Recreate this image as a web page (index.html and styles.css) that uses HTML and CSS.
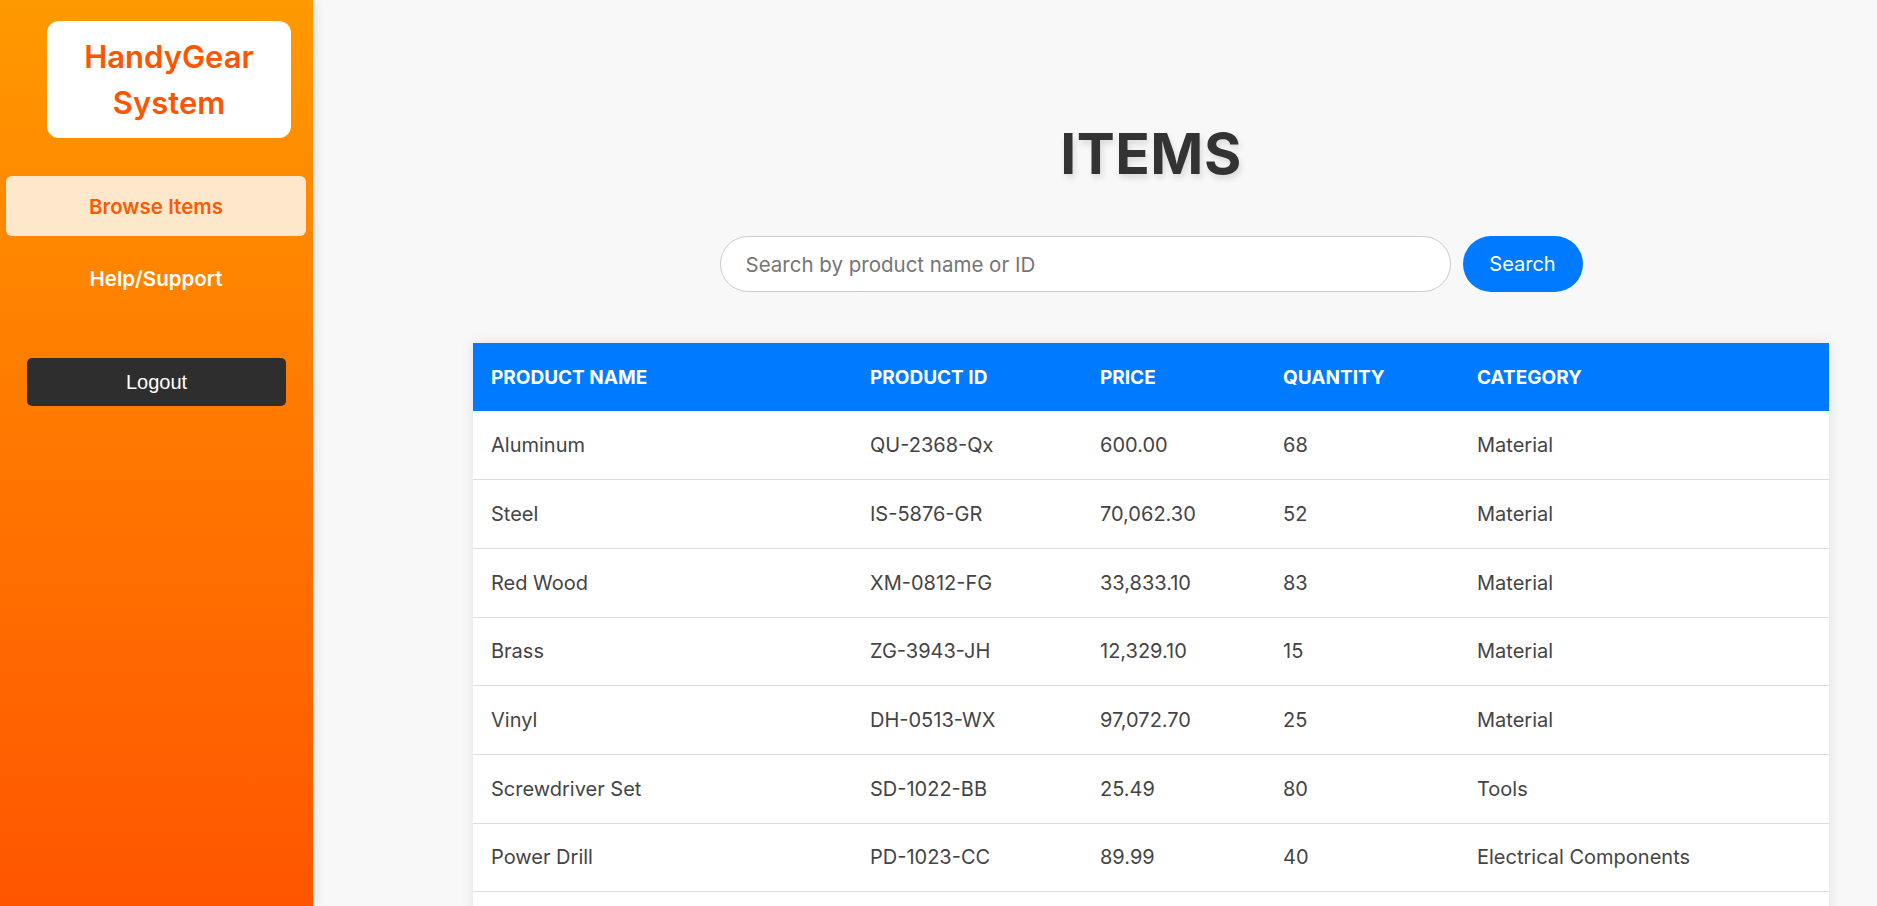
FILE: index.html
```html
<!DOCTYPE html>
<html lang="en">
<head>
<meta charset="utf-8">
<title>HandyGear System - Items</title>
<link rel="stylesheet" href="styles.css">
</head>
<body>
<div class="layout">
  <aside class="sidebar">
    <div class="logo">HandyGear<br>System</div>
    <nav class="nav">
      <a class="nav-item active" href="#">Browse Items</a>
      <a class="nav-item" href="#">Help/Support</a>
    </nav>
    <button class="logout">Logout</button>
  </aside>
  <main class="main">
    <h1 class="title">ITEMS</h1>
    <form class="search">
      <input class="search-input" type="text" placeholder="Search by product name or ID">
      <button class="search-btn" type="button">Search</button>
    </form>
    <table class="items">
      <colgroup>
        <col class="c1"><col class="c2"><col class="c3"><col class="c4"><col class="c5">
      </colgroup>
      <thead>
        <tr><th>Product Name</th><th>Product ID</th><th>Price</th><th>Quantity</th><th>Category</th></tr>
      </thead>
      <tbody>
        <tr><td>Aluminum</td><td>QU-2368-Qx</td><td>600.00</td><td>68</td><td>Material</td></tr>
        <tr><td>Steel</td><td>IS-5876-GR</td><td>70,062.30</td><td>52</td><td>Material</td></tr>
        <tr><td>Red Wood</td><td>XM-0812-FG</td><td>33,833.10</td><td>83</td><td>Material</td></tr>
        <tr><td>Brass</td><td>ZG-3943-JH</td><td>12,329.10</td><td>15</td><td>Material</td></tr>
        <tr><td>Vinyl</td><td>DH-0513-WX</td><td>97,072.70</td><td>25</td><td>Material</td></tr>
        <tr><td>Screwdriver Set</td><td>SD-1022-BB</td><td>25.49</td><td>80</td><td>Tools</td></tr>
        <tr><td>Power Drill</td><td>PD-1023-CC</td><td>89.99</td><td>40</td><td>Electrical Components</td></tr>
        <tr class="filler"><td></td><td></td><td></td><td></td><td></td></tr>
      </tbody>
    </table>
  </main>
</div>
</body>
</html>
```
FILE: styles.css
```css
* { box-sizing: border-box; }
html, body { height: 100%; }
body {
  margin: 0;
  font-family: Inter, "Open Sans", sans-serif;
  background: #f8f8f8;
  overflow: hidden;
}
.layout {
  display: flex;
  height: 100vh;
}
.sidebar {
  flex: 0 0 313px;
  height: 100vh;
  background: linear-gradient(to bottom, #ff9900, #ff5500);
  box-shadow: 2px 0 10px rgba(0, 0, 0, 0.12);
  display: flex;
  flex-direction: column;
  align-items: flex-start;
  position: relative;
  z-index: 1;
}
.logo {
  margin: 21px 0 0 47px;
  width: 244px;
  height: 117px;
  background: #fff;
  border-radius: 12px;
  color: #ff5500;
  font-size: 31px;
  font-weight: 600;
  line-height: 46px;
  text-align: center;
  display: flex;
  align-items: center;
  justify-content: center;
}
.nav {
  margin-top: 38px;
  display: flex;
  flex-direction: column;
  gap: 12px;
  width: 100%;
}
.nav-item {
  margin-left: 6px;
  width: 300px;
  height: 60px;
  border-radius: 6px;
  display: flex;
  align-items: center;
  justify-content: center;
  color: #fff;
  font-size: 20.5px;
  font-weight: 600;
  text-decoration: none;
}
.nav-item.active {
  background: #fee8cc;
  color: #ff5a00;
}
.logout {
  margin: 50px 0 0 27px;
  width: 259px;
  height: 48px;
  border: none;
  border-radius: 5px;
  background: #2e2e2e;
  color: #fff;
  font-family: "Liberation Sans", Arial, sans-serif;
  font-size: 20px;
}
.main {
  flex: 1;
  padding: 118px 48px 0 160px;
  display: flex;
  flex-direction: column;
  align-items: center;
  overflow: hidden;
}
.title {
  margin: 0;
  font-size: 57px;
  font-weight: 700;
  line-height: 72px;
  letter-spacing: 0.5px;
  color: #333;
  text-shadow: 2px 4px 6px rgba(0, 0, 0, 0.12);
}
.search {
  margin: 46px 0 0;
  display: flex;
  gap: 12px;
}
.search-input {
  width: 731px;
  height: 56px;
  border: 1px solid #ccc;
  border-radius: 28px;
  background: #fff;
  padding: 0 25px;
  font-family: inherit;
  font-size: 20.5px;
  color: #333;
  outline: none;
}
.search-input::placeholder { color: #757575; }
.search-btn {
  width: 120px;
  height: 56px;
  border: none;
  border-radius: 28px;
  background: #007bff;
  color: #fff;
  font-family: inherit;
  font-size: 20px;
}
.items {
  margin-top: 51px;
  width: 100%;
  table-layout: fixed;
  border-collapse: collapse;
  background: #fff;
  box-shadow: 0 0 12px rgba(0, 0, 0, 0.1);
}
.c1 { width: 379px; }
.c2 { width: 230px; }
.c3 { width: 183px; }
.c4 { width: 194px; }
.c5 { width: auto; }
.items th {
  background: #007bff;
  color: #fff;
  text-align: left;
  text-transform: uppercase;
  font-size: 19px;
  font-weight: 700;
  height: 68px;
  padding: 0 18px;
}
.items td {
  height: 68.7px;
  padding: 0 18px;
  font-size: 20px;
  color: #444;
  border-bottom: 1px solid #ddd;
}
```
